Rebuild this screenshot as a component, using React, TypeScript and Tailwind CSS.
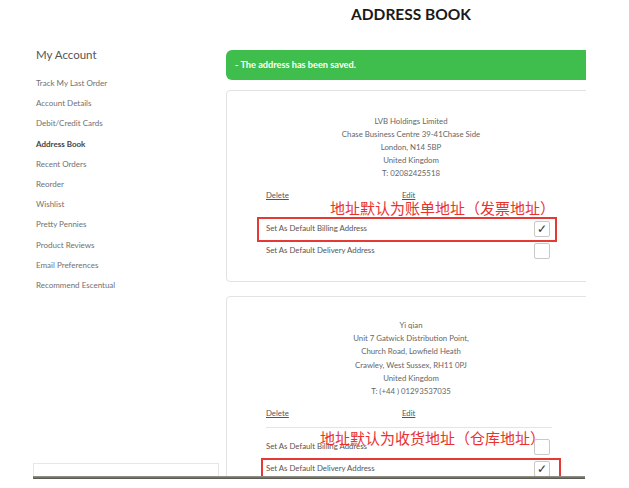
import React from 'react';

const sideLinks = [
  'Track My Last Order',
  'Account Details',
  'Debit/Credit Cards',
  'Address Book',
  'Recent Orders',
  'Reorder',
  'Wishlist',
  'Pretty Pennies',
  'Product Reviews',
  'Email Preferences',
  'Recommend Escentual',
];

const cjk = { fontFamily: '"Noto Sans CJK SC", sans-serif' };

const Checkbox = ({ checked }: { checked?: boolean }) => (
  <div className="w-[16px] h-[16px] border border-[#c9c9c9] rounded-[2px] bg-white flex items-center justify-center text-[12px] leading-none text-[#333]">
    {checked ? '✓' : null}
  </div>
);

const OptionRow = ({ label, checked }: { label: string; checked?: boolean }) => (
  <div className="h-[22px] flex items-center justify-between pr-[6px]">
    <span className="text-[7.8px] text-[#555]">{label}</span>
    <Checkbox checked={checked} />
  </div>
);

const Actions = () => (
  <div className="flex mt-[9px] text-[7.8px] leading-[13px] text-[#555]">
    <span className="w-[136px] underline">Delete</span>
    <span className="underline">Edit</span>
  </div>
);

export default function App() {
  return (
    <div className="w-[629px] h-[488px] overflow-hidden bg-white" style={{ fontFamily: 'Lato, "Open Sans", sans-serif' }}>
      <div className="h-[476px] overflow-hidden flex">
        <aside className="w-[226px] shrink-0 flex flex-col">
          <div className="pl-[36px] pt-[47px]">
            <div className="text-[11.5px] leading-[16px] text-[#555]">My Account</div>
            <ul className="mt-[10px]">
              {sideLinks.map((l) => (
                <li
                  key={l}
                  className={
                    l === 'Address Book'
                      ? 'text-[8px] leading-[20.2px] font-bold text-[#444]'
                      : 'text-[8px] leading-[20.2px] text-[#707070]'
                  }
                >
                  {l}
                </li>
              ))}
            </ul>
          </div>
          <div className="mt-auto ml-[33px] w-[186px] h-[13px] border border-b-0 border-[#e6e6e6]" />
        </aside>

        <main className="w-[360px] shrink-0 overflow-hidden">
          <div className="w-[370px]">
            <h1 className="pt-[4px] text-[15.5px] leading-[20px] font-bold text-[#1a1a1a] text-center">ADDRESS BOOK</h1>

            <div className="mt-[26px] h-[30px] rounded-[6px] bg-[#3fbe4d] flex items-center pl-[9px] text-white font-bold text-[9.2px]">
              - The address has been saved.
            </div>

            {/* first address */}
            <div className="relative mt-[10px] h-[192px] border border-[#e2e2e2] rounded-[4px] pl-[39px] pr-[39px]">
              <div className="pt-[24px] text-center text-[7.8px] leading-[13px] text-[#666]">
                <div>LVB Holdings Limited</div>
                <div>Chase Business Centre 39-41Chase Side</div>
                <div>London, N14 5BP</div>
                <div>United Kingdom</div>
                <div>T: 02082425518</div>
              </div>
              <Actions />
              <div className="mt-[16px]">
                <OptionRow label="Set As Default Billing Address" checked />
                <OptionRow label="Set As Default Delivery Address" />
              </div>
              <div className="absolute left-[103px] top-[108px] text-[15px] leading-[17px] text-[#e8322f] whitespace-nowrap" style={cjk}>
                地址默认为账单地址（发票地址）
              </div>
              <div className="absolute left-[30px] top-[126px] w-[300px] h-[25px] border-2 border-[#e53935]" />
            </div>

            {/* second address */}
            <div className="relative mt-[14px] h-[220px] border border-[#e2e2e2] rounded-[4px] pl-[39px] pr-[39px]">
              <div className="pt-[22px] text-center text-[7.8px] leading-[13.2px] text-[#666]">
                <div>Yi qian</div>
                <div>Unit 7 Gatwick Distribution Point,</div>
                <div>Church Road, Lowfield Heath</div>
                <div>Crawley, West Sussex, RH11 0PJ</div>
                <div>United Kingdom</div>
                <div>T: (+44 ) 01293537035</div>
              </div>
              <Actions />
              <div className="mt-[7px] mr-[4px] border-t border-[#e4e4e4]" />
              <div className="mt-[8px]">
                <OptionRow label="Set As Default Billing Address" />
                <OptionRow label="Set As Default Delivery Address" checked />
              </div>
              <div className="absolute left-[93px] top-[132px] text-[15px] leading-[17px] text-[#e8322f] whitespace-nowrap" style={cjk}>
                地址默认为收货地址（仓库地址）
              </div>
              <div className="absolute left-[34px] top-[161px] w-[300px] h-[24px] border-2 border-[#e53935]" />
            </div>
          </div>
        </main>
      </div>
      <div className="ml-[33px] w-[552px] h-[3px] bg-gradient-to-b from-[#9a9a90] to-[#4f4f48]" />
    </div>
  );
}
